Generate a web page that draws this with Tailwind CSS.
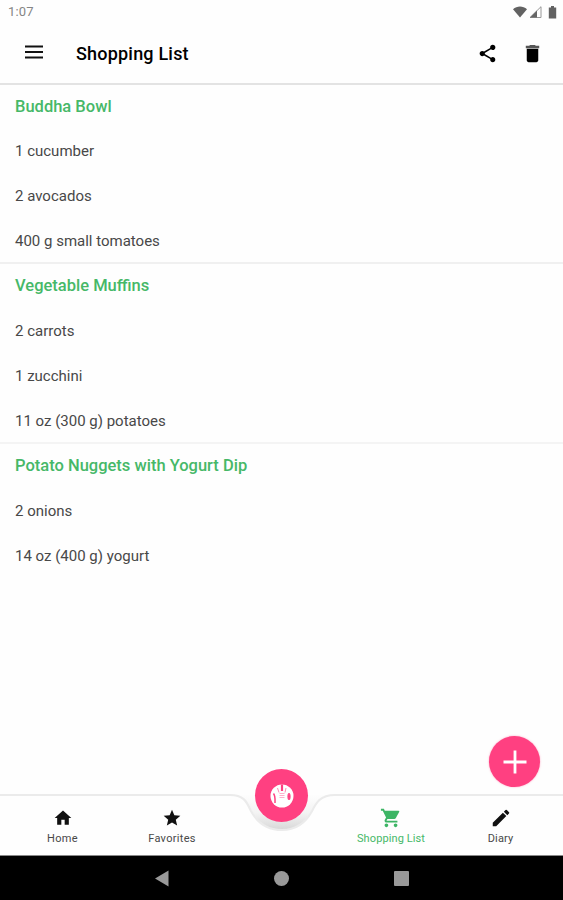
<!DOCTYPE html>
<html lang="en">
<head>
    <meta charset="utf-8"/>
    <meta content="width=device-width, initial-scale=1.0" name="viewport"/>
    <title>Shopping List</title>
    <script src="https://cdn.jsdelivr.net/npm/@tailwindcss/browser@4"></script>
</head>
<body class="bg-white font-['Roboto',sans-serif] text-[#484848]">
    <div class="relative w-[563px] h-[900px] flex flex-col overflow-hidden bg-[#fefefe]">
        <!-- Status bar -->
        <div class="h-6 shrink-0 flex items-center justify-between pl-2 pr-[6px] text-[13px] text-[#858585]">
            <span class="tracking-[0.2px]">1:07</span>
            <div class="flex items-center gap-[2px]">
                <svg class="w-[14px] h-3" viewBox="0 0 14 12" fill="#626262"><path d="M0 3.2C4-.3 10-.3 14 3.2L7 11.5z"/></svg>
                <svg class="w-[13px] h-3" viewBox="0 0 13 12"><path d="M12 .7V11.5H1z" fill="#fff" stroke="#8c8c8c" stroke-width=".9"/><path d="M8 4.6V11.5H1z" fill="#666"/></svg>
                <svg class="w-[9px] h-[13px] ml-1" viewBox="0 0 9 13" fill="#626262"><path d="M3 0h3v1.5h2.2V12.5H.8V1.5H3z"/></svg>
            </div>
        </div>
        <!-- App bar -->
        <div class="h-[61px] shrink-0 flex items-center border-b-2 border-[#e3e3e3] pl-[25px] pr-[19px] text-black">
            <svg class="w-[18px] h-[14px] -mt-[3px]" viewBox="0 0 18 14" fill="#111"><path d="M0 .5h18v2H0zM0 6h18v2H0zM0 11.5h18v2H0z"/></svg>
            <h1 class="ml-[33px] text-[18px] font-medium tracking-[0.2px]">Shopping List</h1>
            <svg class="w-[21px] h-[21px] ml-auto -mt-[1px]" viewBox="0 0 24 24"><path d="M18 16.08c-.76 0-1.44.3-1.96.77L8.91 12.7c.05-.23.09-.46.09-.7s-.04-.47-.09-.7l7.05-4.11c.54.5 1.25.81 2.04.81 1.66 0 3-1.34 3-3s-1.34-3-3-3-3 1.34-3 3c0 .24.04.47.09.7L8.04 9.81C7.5 9.31 6.79 9 6 9c-1.66 0-3 1.34-3 3s1.34 3 3 3c.79 0 1.5-.31 2.04-.81l7.12 4.16c-.05.21-.08.43-.08.65 0 1.61 1.31 2.92 2.92 2.92s2.92-1.31 2.92-2.92-1.31-2.92-2.92-2.92z"/></svg>
            <svg class="w-[23px] h-[23px] ml-[23px] -mt-[1px]" viewBox="0 0 24 24"><path d="M6 19c0 1.100.9 2 2 2h8c1.100 0 2-.9 2-2V7H6z"/><path d="M19 4h-3.500l-1-1h-5l-1 1H5v2.500h14z" fill="#555"/></svg>
        </div>
        <!-- Ingredients -->
        <div class="flex-1 text-[15px]">
            <section class="h-[179px] border-b-2 border-[#f0f0f0]">
                <h2 class="h-[44px] flex items-center pl-[15px] text-[16.5px] font-medium text-[#46b868]">Buddha Bowl</h2>
                <ul class="pl-[15px]">
                    <li class="h-[45px] flex items-center">1 cucumber</li>
                    <li class="h-[45px] flex items-center">2 avocados</li>
                    <li class="h-[45px] flex items-center">400 g small tomatoes</li>
                </ul>
            </section>
            <section class="h-[180px] border-b-2 border-[#f4f4f4]">
                <h2 class="h-[45px] flex items-center pl-[15px] text-[16.5px] font-medium text-[#46b868]">Vegetable Muffins</h2>
                <ul class="pl-[15px]">
                    <li class="h-[45px] flex items-center">2 carrots</li>
                    <li class="h-[45px] flex items-center">1 zucchini</li>
                    <li class="h-[45px] flex items-center">11 oz (300 g) potatoes</li>
                </ul>
            </section>
            <section>
                <h2 class="h-[45px] flex items-center pl-[15px] text-[16.5px] font-medium text-[#46b868]">Potato Nuggets with Yogurt Dip</h2>
                <ul class="pl-[15px]">
                    <li class="h-[45px] flex items-center">2 onions</li>
                    <li class="h-[45px] flex items-center">14 oz (400 g) yogurt</li>
                </ul>
            </section>
        </div>
        <!-- Bottom navigation -->
        <nav class="relative h-[62px] shrink-0 flex justify-between pt-[14px] text-[11px] leading-[13px]">
            <svg class="absolute left-0 top-0 w-[563px] h-[62px] overflow-visible" viewBox="0 0 563 62" fill="none">
                <defs>
                    <linearGradient id="notch" x1="0" y1="0" x2="0" y2="38" gradientUnits="userSpaceOnUse">
                        <stop offset="0" stop-color="#fefefe"/>
                        <stop offset=".5" stop-color="#f3f3f3"/>
                        <stop offset="1" stop-color="#d4d4d4"/>
                    </linearGradient>
                </defs>
                <path d="M232 1C246 2 248 9 252 17C259 30 269 36 282 36S304 30 311 17C315 9 319 2 333 1z" fill="url(#notch)"/>
                <path d="M0 1H230C245 1 247 9 251 17C258 30 268 36 282 36S305 30 312 17C316 9 320 1 335 1H563" stroke="#ebebeb" stroke-width="2.200"/>
                <path d="M0 61.500H563" stroke="#888"/>
            </svg>
            <a class="relative w-[125px] flex flex-col items-center gap-1">
                <svg class="w-5 h-5" viewBox="0 0 24 24" fill="#111"><path d="M10 20v-6h4v6h5v-8h3L12 3 2 12h3v8z"/></svg>
                <span class="tracking-[0.3px]">Home</span>
            </a>
            <a class="relative w-[94px] flex flex-col items-center gap-1">
                <svg class="w-5 h-5" viewBox="0 0 24 24" fill="#111"><path d="M12 17.270L18.180 21l-1.640-7.030L22 9.240l-7.190-.61L12 2 9.190 8.630 2 9.240l5.460 4.730L5.820 21z"/></svg>
                <span class="tracking-[0.3px]">Favorites</span>
            </a>
            <div class="w-[125px]"></div>
            <a class="relative w-[94px] flex flex-col items-center gap-1 text-[#46b868]">
                <svg class="w-[22px] h-[22px] -my-[1px]" viewBox="0 0 24 24" fill="#3db565"><path d="M7 18c-1.100 0-1.990.9-1.990 2S5.900 22 7 22s2-.9 2-2-.9-2-2-2zM1 2v2h2l3.600 7.590-1.350 2.450c-.16.28-.25.61-.25.96 0 1.100.9 2 2 2h12v-2H7.420c-.14 0-.25-.11-.25-.25l.03-.12.9-1.630h7.450c.75 0 1.410-.41 1.750-1.030l3.580-6.490A1 1 0 0 0 20 4H5.210l-.94-2H1zm16 16c-1.100 0-1.990.9-1.990 2s.89 2 1.990 2 2-.9 2-2-.9-2-2-2z"/></svg>
                <span class="tracking-[0.1px]">Shopping List</span>
            </a>
            <a class="relative w-[125px] flex flex-col items-center gap-1">
                <svg class="w-[22px] h-[22px] -my-[1px]" viewBox="0 0 24 24" fill="#111"><path d="M3 17.250V21h3.750L17.810 9.940l-3.750-3.750L3 17.250zM20.710 7.040a1 1 0 0 0 0-1.410l-2.340-2.340a1 1 0 0 0-1.410 0l-1.830 1.830 3.750 3.750 1.830-1.830z"/></svg>
                <span class="tracking-[0.1px]">Diary</span>
            </a>
        </nav>
        <!-- Android system buttons -->
        <div class="h-11 shrink-0 bg-black flex items-center justify-center gap-[105px]">
            <svg class="w-[15px] h-[17px]" viewBox="0 0 15 17" fill="#999"><path d="M1 8.500L14.500.5v16z"/></svg>
            <div class="w-[15px] h-[15px] rounded-full bg-[#999]"></div>
            <div class="w-[15px] h-[15px] rounded-[1px] bg-[#999]"></div>
        </div>
        <!-- Floating buttons -->
        <button class="absolute left-[489px] top-[736px] w-[51px] h-[51px] rounded-full bg-[#ff4081] flex items-center justify-center shadow-[0_0_2px_#ff408180]">
            <svg class="w-6 h-6" viewBox="0 0 24 24" stroke="#fff" stroke-width="2.800"><path d="M12 .5V23.500M.5 12H23.500"/></svg>
        </button>
        <button class="absolute left-[255px] top-[769px] w-[53px] h-[53px] rounded-full bg-[#ff4081] flex items-center justify-center">
            <svg class="w-6 h-6" viewBox="0 0 24 24" fill="none">
                <circle cx="12" cy="12" r="11.500" fill="#fff"/>
                <g stroke="#ff4081">
                    <path d="M3.500 9.500C5.500 12 5 16 5 19" stroke-width="1.500"/>
                    <path d="M12 .5V7" stroke-width="2.200"/>
                    <path d="M7.500 4L9 8.500M16 4L15 8.500" stroke-width=".6"/>
                    <path d="M9.500 9.500h5M9.500 11.500h5M9.500 13.500h5" stroke-width=".7" opacity=".6"/>
                    <ellipse cx="19" cy="12.500" rx="1" ry="3" stroke-width="1.200" fill="#ff4081"/>
                </g>
            </svg>
        </button>
    </div>
</body>
</html>
